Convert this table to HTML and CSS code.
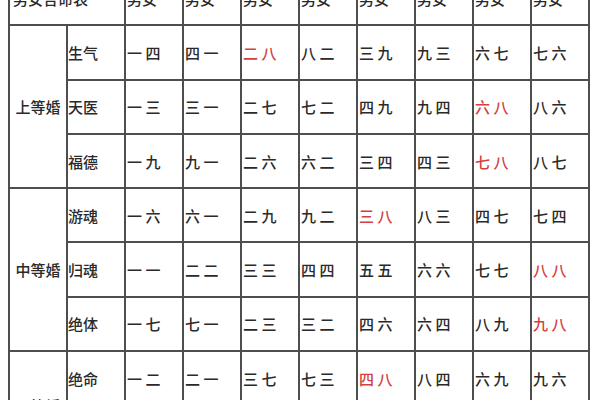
FILE: index.html
```html
<!DOCTYPE html>
<html lang="zh">
<head>
<meta charset="utf-8">
<title>男女合命表</title>
<link rel="stylesheet" href="styles.css">
</head>
<body>
<div class="sheet">
<table class="chart">
  <colgroup>
    <col><col><col><col><col><col><col><col><col><col>
  </colgroup>
  <tr class="head">
    <td colspan="2">男女合命表</td>
    <td>男女</td><td>男女</td><td>男女</td><td>男女</td><td>男女</td><td>男女</td><td>男女</td><td>男女</td>
  </tr>
  <tr>
    <td rowspan="3" class="group">上等婚</td>
    <td class="kind">生气</td>
    <td>一 四</td><td>四 一</td><td class="hit">二 八</td><td>八 二</td><td>三 九</td><td>九 三</td><td>六 七</td><td>七 六</td>
  </tr>
  <tr>
    <td class="kind">天医</td>
    <td>一 三</td><td>三 一</td><td>二 七</td><td>七 二</td><td>四 九</td><td>九 四</td><td class="hit">六 八</td><td>八 六</td>
  </tr>
  <tr>
    <td class="kind">福德</td>
    <td>一 九</td><td>九 一</td><td>二 六</td><td>六 二</td><td>三 四</td><td>四 三</td><td class="hit">七 八</td><td>八 七</td>
  </tr>
  <tr>
    <td rowspan="3" class="group">中等婚</td>
    <td class="kind">游魂</td>
    <td>一 六</td><td>六 一</td><td>二 九</td><td>九 二</td><td class="hit">三 八</td><td>八 三</td><td>四 七</td><td>七 四</td>
  </tr>
  <tr>
    <td class="kind">归魂</td>
    <td>一 一</td><td>二 二</td><td>三 三</td><td>四 四</td><td>五 五</td><td>六 六</td><td>七 七</td><td class="hit">八 八</td>
  </tr>
  <tr>
    <td class="kind">绝体</td>
    <td>一 七</td><td>七 一</td><td>二 三</td><td>三 二</td><td>四 六</td><td>六 四</td><td>八 九</td><td class="hit">九 八</td>
  </tr>
  <tr>
    <td rowspan="2" class="group">下等婚</td>
    <td class="kind">绝命</td>
    <td>一 二</td><td>二 一</td><td>三 七</td><td>七 三</td><td class="hit">四 八</td><td>八 四</td><td>六 九</td><td>九 六</td>
  </tr>
  <tr>
    <td class="kind">五鬼</td>
    <td>一 八</td><td>八 一</td><td>二 四</td><td>四 二</td><td>三 六</td><td>六 三</td><td>七 九</td><td>九 七</td>
  </tr>
</table>
</div>
</body>
</html>
```

FILE: styles.css
```css
html, body {
  margin: 0;
  padding: 0;
  background: #ffffff;
}

.sheet {
  width: 600px;
  height: 400px;
  overflow: hidden;
}

.chart {
  margin-top: -30px;
  margin-left: 8px;
  border-collapse: collapse;
  table-layout: fixed;
  width: 582px;
  font-family: "Noto Sans CJK SC", "Noto Sans", sans-serif;
  font-size: 15px;
  font-weight: 500;
  color: #2a2a2a;
}

.chart col {
  width: 58px;
}

.chart tr {
  height: 54.3px;
}

.chart td {
  border: 2px solid #4e4e4e;
  padding: 0 0 0 1px;
  text-align: left;
  vertical-align: middle;
  white-space: nowrap;
  line-height: 1;
}

.chart .head td {
  padding-left: 1px;
}

.chart .head td:first-child {
  padding-left: 3px;
}

.chart .group {
  text-align: center;
  padding: 0;
}

.chart .kind {
  padding-left: 0;
}

.chart .hit {
  color: #d2413f;
}
```
